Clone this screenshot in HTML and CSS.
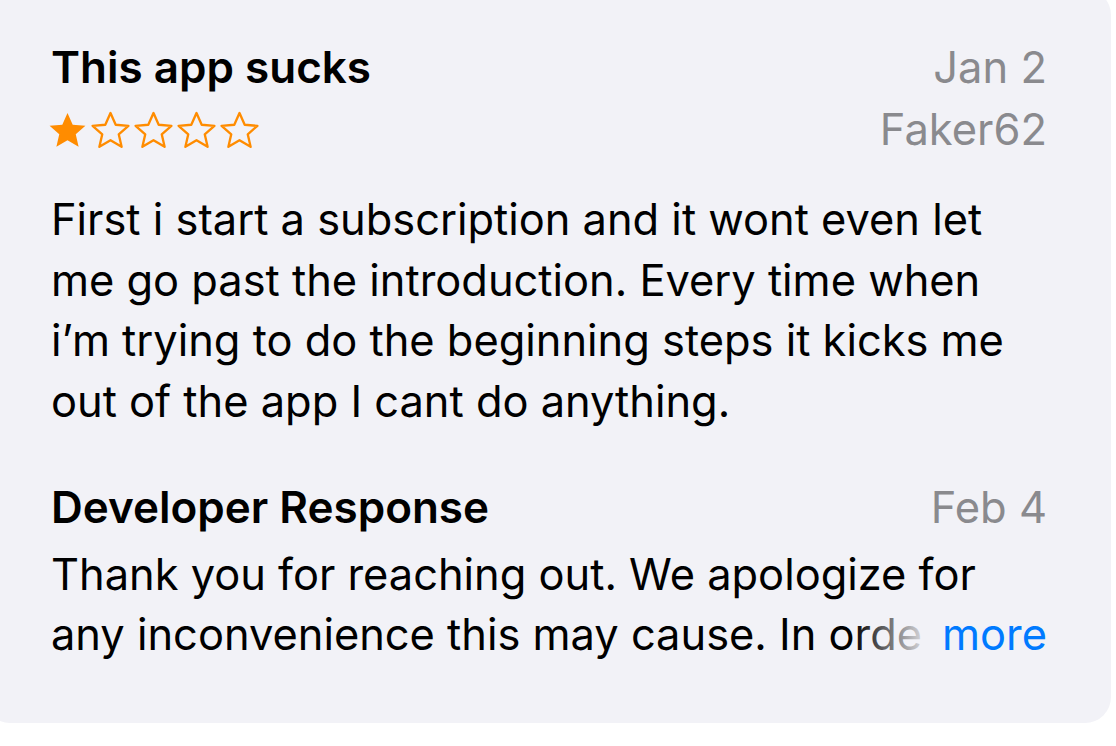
FILE: index.html
```html
<!DOCTYPE html>
<html lang="en">
<head>
    <meta charset="UTF-8">
    <meta name="viewport" content="width=device-width, initial-scale=1.0">
    <link rel="stylesheet" href="styles.css">
</head>
<body>
<div class="card">
    <div class="review-head">
        <div class="head-left">
            <h2 class="title">This app sucks</h2>
            <div class="stars">
                <svg class="star" viewBox="0 0 24 24"><path class="fill" d="M12 2.2l2.9 6.6 7.1.6-5.4 4.7 1.6 7-6.2-3.7-6.2 3.7 1.6-7L2 9.4l7.1-.6z"/></svg>
                <svg class="star" viewBox="0 0 24 24"><path class="line" d="M12 2.2l2.9 6.6 7.1.6-5.4 4.7 1.6 7-6.2-3.7-6.2 3.7 1.6-7L2 9.4l7.1-.6z"/></svg>
                <svg class="star" viewBox="0 0 24 24"><path class="line" d="M12 2.2l2.9 6.6 7.1.6-5.4 4.7 1.6 7-6.2-3.7-6.2 3.7 1.6-7L2 9.4l7.1-.6z"/></svg>
                <svg class="star" viewBox="0 0 24 24"><path class="line" d="M12 2.2l2.9 6.6 7.1.6-5.4 4.7 1.6 7-6.2-3.7-6.2 3.7 1.6-7L2 9.4l7.1-.6z"/></svg>
                <svg class="star" viewBox="0 0 24 24"><path class="line" d="M12 2.2l2.9 6.6 7.1.6-5.4 4.7 1.6 7-6.2-3.7-6.2 3.7 1.6-7L2 9.4l7.1-.6z"/></svg>
            </div>
        </div>
        <div class="head-right">
            <div class="date">Jan 2</div>
            <div class="author">Faker62</div>
        </div>
    </div>

    <p class="review-body">First i start a subscription and it wont even let me go past the introduction. Every time when i’m trying to do the beginning steps it kicks me out of the app I cant do anything.</p>

    <div class="response-head">
        <h3 class="response-title">Developer Response</h3>
        <div class="date">Feb 4</div>
    </div>
    <div class="response">
        <p class="response-body">Thank you for reaching out. We apologize for any inconvenience this may cause. In orde</p>
        <a class="more" href="#">more</a>
    </div>
</div>
</body>
</html>
```

FILE: styles.css
```css
body {
    margin: 0;
    padding: 0;
    background-color: #fff;
    font-family: Inter, "Liberation Sans", sans-serif;
    color: #000;
}

.card {
    box-sizing: border-box;
    width: 1127px;
    height: 734px;
    margin: -11px 0 0 -16px;
    padding: 50px 64px 0 67px;
    background-color: #f2f2f7;
    border-radius: 26px;
}

.review-head {
    display: flex;
    justify-content: space-between;
}

.title {
    margin: 0;
    font-size: 44px;
    font-weight: 600;
    line-height: 56px;
}

.stars {
    display: flex;
    margin: 14px 0 0 -5px;
}

.star {
    width: 43px;
    height: 43px;
}

.star .fill {
    fill: #ff8c00;
}

.star .line {
    fill: none;
    stroke: #ff8c00;
    stroke-width: 1.3;
    stroke-linejoin: round;
}

.head-right {
    text-align: right;
}

.date,
.author {
    color: #8a8a8e;
    font-size: 43.5px;
    line-height: 56px;
}

.author {
    margin-top: 6px;
}

.review-body {
    margin: 32px 0 0;
    font-size: 43.4px;
    line-height: 60.5px;
}

.response-head {
    display: flex;
    justify-content: space-between;
    margin-top: 48px;
}

.response-title {
    margin: 0;
    font-size: 44px;
    font-weight: 600;
    line-height: 56px;
}

.response {
    position: relative;
    margin-top: 9px;
}

.response-body {
    margin: 0;
    font-size: 43.4px;
    line-height: 60px;
}

.more {
    position: absolute;
    right: 0;
    bottom: 0;
    padding-left: 90px;
    font-size: 43.4px;
    line-height: 60px;
    color: #007aff;
    text-decoration: none;
    background: linear-gradient(to right, rgba(242, 242, 247, 0) 0, #f2f2f7 80px);
}
```
